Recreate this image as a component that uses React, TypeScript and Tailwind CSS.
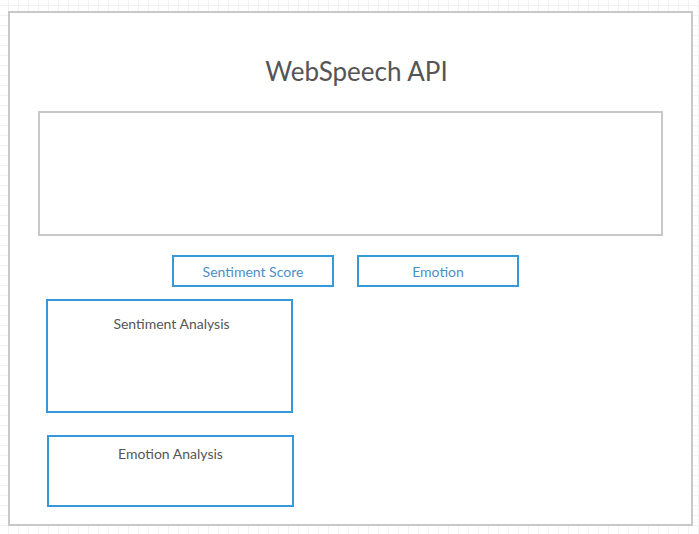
const App = () => {
  return (
    <div className="min-h-[534px] w-full overflow-hidden bg-white bg-[linear-gradient(to_right,#f2f2f2_1px,transparent_1px),linear-gradient(to_bottom,#f2f2f2_1px,transparent_1px)] bg-size-[10px_10px] bg-position-[8px_5px] pt-[11px] pl-[8px] font-['Lato',sans-serif]">
      <div className="flex h-[515px] w-[685px] flex-col border-2 border-[#c8c8c8] bg-white">
        <h1 className="mt-[42px] pl-[12px] text-center text-[26px] leading-[32px] font-normal text-[#555]">
          WebSpeech API
        </h1>

        {/* transcript area */}
        <div className="mt-[24px] ml-[28px] h-[125px] w-[625px] border-2 border-[#c8c8c8]" />

        <div className="mt-[19px] ml-[162px] flex gap-[23px]">
          <button className="h-[32px] w-[162px] border-2 border-[#3498db] text-[14px] text-[#4a8fc6]">
            Sentiment Score
          </button>
          <button className="h-[32px] w-[162px] border-2 border-[#3498db] text-[14px] text-[#4a8fc6]">
            Emotion
          </button>
        </div>

        <div className="mt-[12px] ml-[36px] h-[114px] w-[247px] border-2 border-[#3498db] pt-[13px] pl-[4px] text-center text-[14px] leading-[20px] text-[#555]">
          Sentiment Analysis
        </div>

        <div className="mt-[22px] ml-[37px] h-[72px] w-[247px] border-2 border-[#3498db] pt-[7px] text-center text-[14px] leading-[20px] text-[#555]">
          Emotion Analysis
        </div>
      </div>
    </div>
  );
};

export default App;
